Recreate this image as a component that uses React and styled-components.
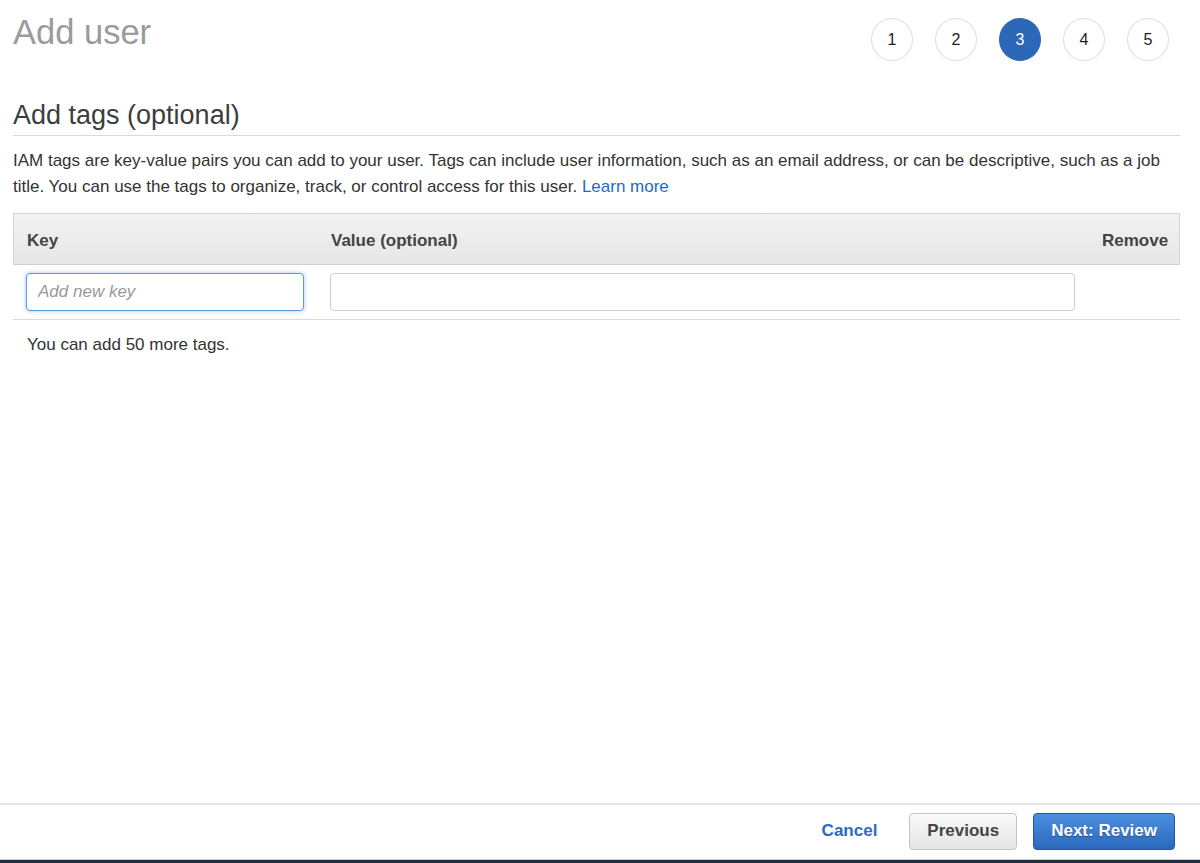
import React from "react";
import styled, { createGlobalStyle } from "styled-components";

const GlobalStyle = createGlobalStyle`
  html, body { margin: 0; padding: 0; background: #fff; }
  body { font-family: "Liberation Sans", Arial, Helvetica, sans-serif; color: #333; }
  * { box-sizing: border-box; }
`;

const Page = styled.div`
  display: flex;
  flex-direction: column;
  height: 863px;
`;

const Main = styled.main`
  flex: 1;
  padding: 0 20px 0 13px;
`;

const Header = styled.header`
  display: flex;
  justify-content: space-between;
  align-items: flex-start;
`;

const Title = styled.h1`
  margin: 16px 0 0;
  font-size: 34.5px;
  line-height: 32px;
  font-weight: 400;
  color: #9b9b9b;
`;

const Steps = styled.ol`
  display: flex;
  gap: 22px;
  list-style: none;
  margin: 18px 11px 0 0;
  padding: 0;
`;

const Step = styled.li`
  width: 42px;
  height: 43px;
  border-radius: 50%;
  display: flex;
  align-items: center;
  justify-content: center;
  font-size: 16px;
  color: ${(p) => (p.$active ? "#fff" : "#222")};
  background: ${(p) => (p.$active ? "#2c68b7" : "#fff")};
  border: 1px solid ${(p) => (p.$active ? "#2c68b7" : "#dedede")};
`;

const SectionTitle = styled.h2`
  margin: 38px 0 0;
  padding-bottom: 4px;
  font-size: 27px;
  line-height: 32px;
  font-weight: 400;
  color: #3d3d3d;
  border-bottom: 1px solid #d9d9d9;
`;

const Intro = styled.p`
  margin: 12px 0 0;
  font-size: 17px;
  line-height: 26px;
  color: #333;
  padding-right: 4px;
`;

const Link = styled.a`
  color: #1f6bc4;
  text-decoration: none;
`;

const Table = styled.div`
  margin-top: 13px;
  border-top: 1px solid #d6d6d6;
`;

const Row = styled.div`
  display: grid;
  grid-template-columns: 304px 771px 1fr;
  align-items: center;
  border-bottom: 1px solid #d9d9d9;
  ${(p) =>
    p.$head
      ? `
    height: 51px;
    padding-top: 3px;
    background: linear-gradient(#f2f2f2, #e6e6e6);
    border-left: 1px solid #d6d6d6;
    border-right: 1px solid #d6d6d6;
    border-bottom-color: #cfcfcf;
  `
      : `height: 55px;`}
`;

const HeadCell = styled.div`
  padding: 0 13px;
  font-size: 17px;
  font-weight: 700;
  color: #444;
  text-align: ${(p) => (p.$right ? "right" : "left")};
`;

const Cell = styled.div`
  padding: 0 13px;
`;

const TextInput = styled.input`
  display: block;
  width: 100%;
  height: 38px;
  padding: 0 11px;
  font-family: inherit;
  font-size: 17px;
  color: #333;
  background: #fff;
  border: 1px solid ${(p) => (p.$focused ? "#5a9ae3" : "#ccc")};
  border-radius: 4px;
  outline: none;
  caret-color: #333;
  box-shadow: ${(p) => (p.$focused ? "0 0 4px rgba(80, 150, 230, 0.55)" : "none")};
  &::placeholder {
    font-style: italic;
    color: #999;
  }
`;

const Note = styled.p`
  margin: 12px 0 0;
  padding-left: 14px;
  font-size: 17px;
  line-height: 26px;
  color: #333;
`;

const Footer = styled.footer`
  display: flex;
  justify-content: flex-end;
  align-items: center;
  gap: 16px;
  height: 57px;
  padding: 0 25px 2px 0;
  border-top: 2px solid #e4e4e4;
  border-bottom: 1px solid #cdcdcd;
`;

const BottomBar = styled.div`
  height: 3px;
  background: #232f3e;
`;

const Button = styled.button`
  height: 37px;
  padding: 0 17px;
  font-family: inherit;
  font-size: 17px;
  font-weight: 700;
  border-radius: 4px;
  cursor: pointer;
  ${(p) =>
    p.$variant === "primary"
      ? `
    color: #fff;
    background: linear-gradient(#4b8fe0, #2b68bb);
    border: 1px solid #1f579f;
    text-shadow: 0 1px 1px rgba(0,0,0,0.35);
  `
      : p.$variant === "link"
      ? `
    color: #2a6bc1;
    background: none;
    border: none;
    padding: 0 16px;
  `
      : `
    color: #444;
    background: linear-gradient(#fafafa, #e4e4e4);
    border: 1px solid #c4c4c4;
  `}
`;

export default function App() {
  const steps = [1, 2, 3, 4, 5];
  return (
    <>
      <GlobalStyle />
      <Page>
        <Main>
          <Header>
            <Title>Add user</Title>
            <Steps>
              {steps.map((s) => (
                <Step key={s} $active={s === 3}>
                  {s}
                </Step>
              ))}
            </Steps>
          </Header>
          <SectionTitle>Add tags (optional)</SectionTitle>
          <Intro>
            IAM tags are key-value pairs you can add to your user. Tags can include user
            information, such as an email address, or can be descriptive, such as a job
            title. You can use the tags to organize, track, or control access for this
            user. <Link href="#">Learn more</Link>
          </Intro>
          <Table>
            <Row $head>
              <HeadCell>Key</HeadCell>
              <HeadCell>Value (optional)</HeadCell>
              <HeadCell $right>Remove</HeadCell>
            </Row>
            <Row>
              <Cell>
                <TextInput $focused placeholder="Add new key" autoFocus />
              </Cell>
              <Cell>
                <TextInput />
              </Cell>
              <Cell />
            </Row>
          </Table>
          <Note>You can add 50 more tags.</Note>
        </Main>
        <Footer>
          <Button $variant="link">Cancel</Button>
          <Button>Previous</Button>
          <Button $variant="primary">Next: Review</Button>
        </Footer>
        <BottomBar />
      </Page>
    </>
  );
}
